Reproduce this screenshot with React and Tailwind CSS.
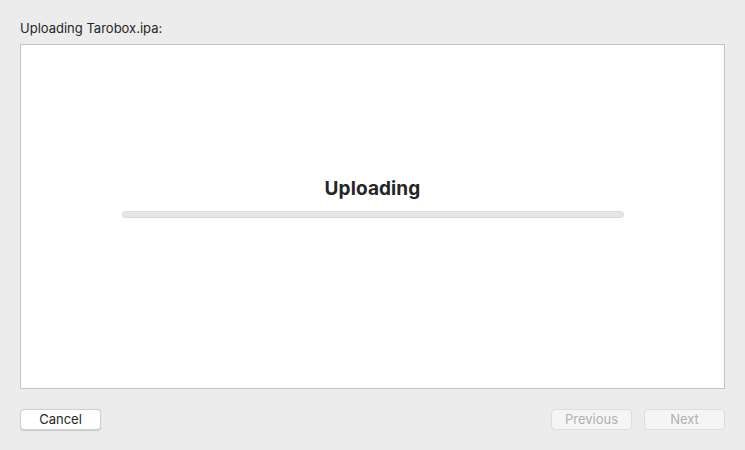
export default function App() {
  return (
    <div className="w-[745px] h-[450px] bg-[#ececec] flex flex-col px-5 font-['Inter','Liberation_Sans',sans-serif] text-[#262626]">
      <div className="h-[44px] flex items-end pb-[9px] text-[13px] leading-none">Uploading Tarobox.ipa:</div>
      <div className="h-[345px] bg-white border border-[#c4c4c4] flex flex-col items-center pt-[134px]">
        <div className="text-[19px] font-bold leading-none tracking-[0.1px]">Uploading</div>
        <div className="mt-[13px] w-[502px] h-[7px] rounded-full bg-[#e6e6e6] border border-[#dadada]"></div>
      </div>
      <div className="flex justify-between mt-[20px]">
        <button className="w-[81px] h-[21px] bg-white rounded-[4px] border border-[#d0d0d0] shadow-[0_0.5px_1px_rgba(0,0,0,0.15)] text-[13px] leading-none text-[#262626]">Cancel</button>
        <div className="flex gap-[12px]">
          <button className="w-[81px] h-[21px] bg-[#f5f5f5] rounded-[4px] border border-[#dcdcdc] text-[13px] leading-none text-[#b0b0b0]">Previous</button>
          <button className="w-[81px] h-[21px] bg-[#f5f5f5] rounded-[4px] border border-[#dcdcdc] text-[13px] leading-none text-[#b0b0b0]">Next</button>
        </div>
      </div>
    </div>
  );
}
